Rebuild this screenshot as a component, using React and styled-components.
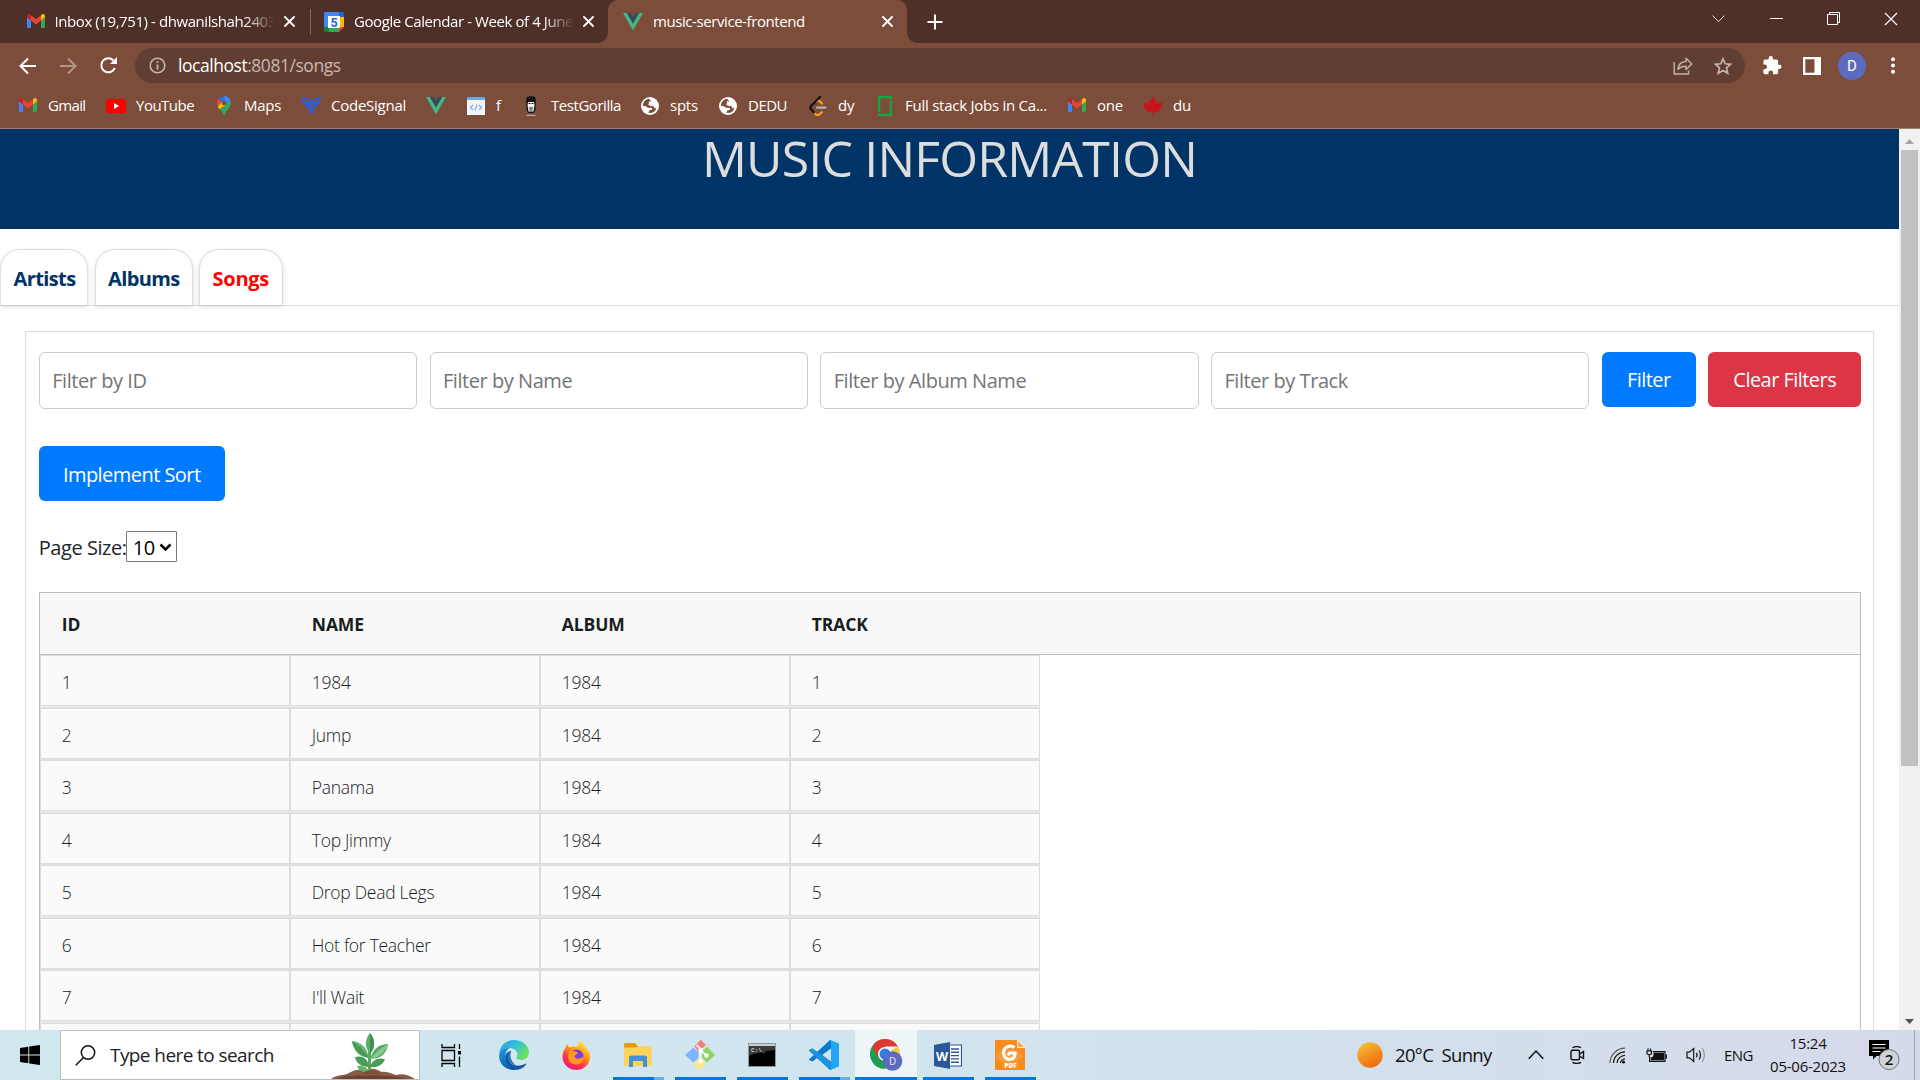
import React from "react";
import styled, { createGlobalStyle, css } from "styled-components";

const GlobalStyle = createGlobalStyle`
  *, *::before, *::after { box-sizing: border-box; }
  body { margin: 0; overflow: hidden; background: #fff; font-family: "Open Sans", "Noto Sans", sans-serif; }
  svg { display: block; flex: none; }
`;

const Desktop = styled.div`
  width: 1920px;
  height: 1080px;
  display: flex;
  flex-direction: column;
  overflow: hidden;
`;

/* ---------- browser chrome ---------- */

const TabStrip = styled.div`
  flex: none;
  height: 43px;
  display: flex;
  align-items: stretch;
  background: #4f3028;
`;

const flare = css`
  content: "";
  position: absolute;
  bottom: 0;
  width: 10px;
  height: 10px;
`;

const Tab = styled.div`
  position: relative;
  display: flex;
  align-items: center;
  width: ${(p) => p.$width}px;
  padding-left: ${(p) => p.$pad}px;
  color: #fff;
  ${(p) =>
    p.$active &&
    css`
      background: #7d4d3b;
      border-radius: 10px 10px 0 0;
      &::before {
        ${flare}
        left: -10px;
        background: radial-gradient(circle at 0 0, transparent 9.5px, #7d4d3b 10px);
      }
      &::after {
        ${flare}
        right: -10px;
        background: radial-gradient(circle at 100% 0, transparent 9.5px, #7d4d3b 10px);
      }
    `}
`;

const TabTitle = styled.div`
  width: 220px;
  margin: 0 9px 2px 10px;
  overflow: hidden;
  white-space: nowrap;
  font-size: 15px;
  line-height: 20px;
  letter-spacing: -0.42px;
  ${(p) =>
    p.$fade &&
    css`
      mask-image: linear-gradient(to right, #000 190px, transparent 220px);
    `}
`;

const TabDivider = styled.div`
  width: 1px;
  height: 26px;
  margin: 9px 13px 0 12px;
  background: #84655a;
`;

const NewTab = styled.div`
  display: flex;
  align-items: center;
  margin-left: 20px;
`;

const WindowControls = styled.div`
  display: flex;
  height: 37px;
  margin-left: auto;
`;

const ControlButton = styled.div`
  width: 57.5px;
  display: flex;
  align-items: center;
  justify-content: center;
`;

const Toolbar = styled.div`
  flex: none;
  height: 43px;
  padding: 5px 0 3px 19px;
  display: flex;
  align-items: center;
  background: #7d4d3b;
`;

const NavButtons = styled.div`
  width: 116px;
  display: flex;
  align-items: center;
  gap: 22px;
`;

const AddressBar = styled.div`
  width: 1610px;
  height: 35px;
  padding: 0 13px 0 14px;
  display: flex;
  align-items: center;
  border-radius: 18px;
  background: #613e32;
`;

const Address = styled.div`
  flex: 1;
  margin: 0 0 1px 12px;
  font-size: 17.5px;
  line-height: 24px;
  letter-spacing: -0.46px;
  color: #c9b7b0;
`;

const Host = styled.span`
  color: #fff;
`;

const AddressActions = styled.div`
  display: flex;
  gap: 21px;
  align-items: center;
`;

const ToolbarActions = styled.div`
  flex: 1;
  display: flex;
  align-items: center;
  padding-left: 18px;
  gap: 20.5px;
`;

const Avatar = styled.div`
  width: 28px;
  height: 28px;
  margin: 0 4px 0 -3px;
  border-radius: 50%;
  background: #5c6bc0;
  color: #fff;
  font: 15px/28px Roboto, sans-serif;
  text-align: center;
`;

const BookmarksBar = styled.div`
  flex: none;
  height: 43px;
  padding: 0 0 3px 18px;
  display: flex;
  align-items: center;
  gap: 20px;
  background: #7d4d3b;
  border-bottom: 1px solid #a27e71;
`;

const Bookmark = styled.div`
  display: flex;
  align-items: center;
  gap: 10px;
`;

const BookmarkIcon = styled.div`
  width: 20px;
  height: 20px;
  display: flex;
  align-items: center;
  justify-content: center;
`;

const BookmarkLabel = styled.div`
  width: ${(p) => p.$width}px;
  white-space: nowrap;
  font-size: 15px;
  line-height: 20px;
  letter-spacing: ${(p) => p.$spacing ?? -0.25}px;
  margin-bottom: 2px;
  color: #fff;
`;

/* ---------- page ---------- */

const Viewport = styled.div`
  flex: none;
  height: 901px;
  display: flex;
`;

const Page = styled.main`
  width: 1899px;
  background: #fff;
`;

const PageHeader = styled.header`
  height: 100px;
  background: #003366;
`;

const Title = styled.h1`
  margin: 0;
  font-size: 50px;
  line-height: 58px;
  font-weight: 400;
  letter-spacing: -0.82px;
  text-align: center;
  color: #ddd;
`;

const PageTabs = styled.nav`
  display: flex;
  gap: 6.5px;
  margin-top: 20px;
  height: 57px;
  border-bottom: 1px solid #ddd;
`;

const PageTab = styled.a`
  width: ${(p) => p.$width}px;
  height: 56px;
  padding: 2px 0 0 12.5px;
  border: 1px solid #ddd;
  border-bottom: none;
  border-radius: 20px 20px 0 0;
  box-shadow: 0 2px 5px rgba(0, 0, 0, 0.13);
  background: #fff;
  color: ${(p) => (p.$active ? "#ff0000" : "#003366")};
  font-size: 20px;
  font-weight: 700;
  line-height: 53px;
  letter-spacing: ${(p) => p.$spacing}px;
`;

const Panel = styled.section`
  margin: 25px 25px 0;
  padding: 20px 11.75px 0 12.75px;
  height: 699px;
  border: 1px solid #ddd;
  border-bottom: none;
`;

const FilterRow = styled.div`
  display: flex;
  align-items: flex-start;
  gap: 12.5px;
`;

const FilterInput = styled.input`
  flex: 1;
  min-width: 0;
  height: 57px;
  padding: 0 12.5px;
  border: 1px solid #ccc;
  border-radius: 6px;
  font-family: inherit;
  font-size: 20px;
  letter-spacing: -0.45px;
  outline: none;
  &::placeholder {
    color: #757575;
  }
`;

const Button = styled.button`
  width: ${(p) => p.$width}px;
  height: 55px;
  padding: ${(p) => p.$drop ?? 0}px 0 0;
  border: none;
  border-radius: 6px;
  background: ${(p) => (p.$danger ? "#dc3545" : "#007bff")};
  color: #fff;
  font-family: inherit;
  font-size: 20px;
  letter-spacing: -0.54px;
`;

const SortRow = styled.div`
  margin-top: 37px;
  display: flex;
`;

const PageSize = styled.label`
  margin-top: 30px;
  display: flex;
  align-items: flex-start;
  font-size: 20px;
  line-height: 33px;
  letter-spacing: -0.45px;
  color: #212529;
`;

const PageSizeText = styled.span`
  width: 87px;
  white-space: nowrap;
`;

const SizeSelect = styled.span`
  width: 51px;
  height: 31px;
  padding: 1px 4px 0 6px;
  display: flex;
  align-items: center;
  justify-content: space-between;
  border: 1px solid #767676;
  border-radius: 1px;
  color: #000;
`;

const Grid = styled.div`
  margin-top: 28px;
  height: 438px;
  overflow: hidden;
  border: 1px solid #babfc7;
  border-bottom: none;
`;

const GridHeader = styled.div`
  height: 62px;
  padding-top: 1px;
  display: flex;
  align-items: center;
  border-bottom: 1px solid #babfc7;
  background: #f8f8f8;
`;

const HeaderCell = styled.div`
  width: 250px;
  padding-left: 22px;
  font-size: 17.5px;
  font-weight: 700;
  letter-spacing: -0.1px;
  color: #181d1f;
`;

const GridRow = styled.div`
  width: 1000px;
  height: 52.5px;
  display: flex;
  border-bottom: 1px solid #dde2eb;
  background: #ececf0;
`;

const Cell = styled.div`
  width: 250px;
  height: 51px;
  padding: 2px 0 0 21px;
  border: 1px solid #ddd;
  background: #fafafa;
  font-size: 17.5px;
  font-weight: 350;
  line-height: 49px;
  letter-spacing: -0.28px;
  color: #181d1f;
`;

const Scrollbar = styled.div`
  width: 21px;
  display: flex;
  flex-direction: column;
  align-items: center;
  background: #f1f1f1;
`;

const ScrollArrow = styled.div`
  height: 21px;
  display: flex;
  align-items: center;
  padding-top: 3px;
`;

const ScrollThumb = styled.div`
  width: 17px;
  height: 616px;
  margin-bottom: auto;
  background: #c1c1c1;
`;

/* ---------- taskbar ---------- */

const Taskbar = styled.footer`
  flex: none;
  height: 50px;
  display: flex;
  background: linear-gradient(to right, #d0e7ee, #d1e5ee 45%, #d3dfec 75%, #d5daea);
`;

const StartButton = styled.div`
  width: 60px;
  display: flex;
  align-items: center;
  justify-content: center;
`;

const SearchBox = styled.div`
  width: 360px;
  display: flex;
  align-items: center;
  padding-left: 14px;
  border: 1px solid #b9bfc2;
  background: #fff;
`;

const SearchText = styled.div`
  flex: 1;
  margin: 0 0 1px 14px;
  font-size: 19px;
  letter-spacing: -0.58px;
  color: #222;
`;

const PlantSlot = styled.div`
  align-self: flex-end;
  margin-right: 4px;
`;

const TaskButton = styled.div`
  width: 62px;
  display: flex;
  flex-direction: column;
  align-items: center;
  justify-content: space-between;
  background: ${(p) => (p.$active ? "rgba(255,255,255,0.6)" : "transparent")};
  &:first-of-type {
    margin-right: 1px;
  }
`;

const TaskList = styled.div`
  display: flex;
`;

const TaskIcon = styled.div`
  height: 47px;
  padding-top: 3px;
  display: flex;
  align-items: center;
`;

const Underline = styled.div`
  width: ${(p) => (p.$full ? 62 : 51)}px;
  height: 3px;
  background: ${(p) =>
    p.$stacked ? "linear-gradient(to right, #0078d7 41px, #66aee7 41px)" : "#0078d7"};
`;

const Tray = styled.div`
  margin-left: auto;
  display: flex;
  align-items: center;
`;

const TrayItem = styled.div`
  width: ${(p) => p.$width}px;
  margin-right: ${(p) => p.$gap}px;
  display: flex;
  align-items: center;
`;

const TrayText = styled.div`
  white-space: pre;
  font-size: ${(p) => p.$size}px;
  letter-spacing: ${(p) => p.$spacing}px;
  line-height: 24px;
  color: #111;
`;

const Clock = styled.div`
  width: 76px;
  margin-right: 23px;
  display: flex;
  flex-direction: column;
  align-items: center;
  font-size: 15px;
  line-height: 23px;
  letter-spacing: -0.24px;
  white-space: nowrap;
  color: #111;
`;

const ShowDesktop = styled.div`
  width: 6px;
  height: 50px;
  border-left: 1px solid #9da4b0;
`;

/* ---------- icons ---------- */

const GmailIcon = ({ w = 18 }) => (
  <svg width={w} height={w * 0.78} viewBox="0 0 18 14">
    <path d="M0 3v9.8c0 .7.5 1.2 1.2 1.2H4V6.5L0 3z" fill="#4285f4" />
    <path d="M14 6.5V14h2.800c.7 0 1.200-.5 1.200-1.200V3l-4 3.500z" fill="#34a853" />
    <path d="M14 1.400v5.100l4-3.200V2.100C18 .3 16-.6 14.700.5l-.7.900z" fill="#fbbc04" />
    <path d="M0 2.100v1.200l4 3.200V1.400L3.300.5C2-.6 0 .3 0 2.100z" fill="#c5221f" />
    <path d="M4 1.200v5.300l5 4 5-4V1.200L9 5.200 4 1.200z" fill="#ea4335" />
  </svg>
);

const CalendarIcon = () => (
  <svg width="20" height="20" viewBox="0 0 20 20">
    <path d="M1.500 0H15v5H5v10H0V1.500C0 .7.7 0 1.500 0z" fill="#4285f4" />
    <path d="M15 0h3.500c.8 0 1.500.7 1.500 1.500V5h-5V0z" fill="#1967d2" />
    <path d="M15 5h5v10h-5z" fill="#fbbc04" />
    <path d="M5 15h10v5H5z" fill="#34a853" />
    <path d="M0 15h5v5H1.500C.7 20 0 19.300 0 18.500V15z" fill="#188038" />
    <path d="M15 15h5l-5 5v-5z" fill="#ea4335" />
    <path d="M4 4h12v12H4z" fill="#fff" />
    <text x="10" y="14.500" fontSize="12.500" fontWeight="700" textAnchor="middle" fontFamily="Roboto, sans-serif" fill="#1967d2">5</text>
  </svg>
);

const VueIcon = () => (
  <svg width="20" height="17.500" viewBox="0 0 196 170">
    <path d="M0 0h39l59 102L157 0h39L98 170z" fill="#41b883" />
    <path d="M39 0h36l23 40 23-40h36L98 102z" fill="#35495e" />
  </svg>
);

const CloseIcon = ({ s = 11, c = "#fff", sw = 1.8 }) => (
  <svg width={s} height={s} viewBox="0 0 11 11" stroke={c} strokeWidth={sw} strokeLinecap="round">
    <path d="M1 1l9 9M10 1l-9 9" />
  </svg>
);

const PlusIcon = () => (
  <svg width="16" height="16" viewBox="0 0 16 16" stroke="#fff" strokeWidth="2">
    <path d="M8 .5v15M.5 8h15" />
  </svg>
);

const BackIcon = ({ flip, c = "#fff" }) => (
  <svg width="18" height="18" viewBox="0 0 18 18" fill="none" stroke={c} strokeWidth="2">
    <path d={flip ? "M1 9h15M9 1.500L16.500 9 9 16.500" : "M17 9H2M9 1.500L1.500 9 9 16.500"} />
  </svg>
);

const ReloadIcon = () => (
  <svg width="19" height="19" viewBox="0 0 19 19" fill="none" stroke="#fff" strokeWidth="2">
    <path d="M15.800 12A7 7 0 1 1 14.400 4.500" />
    <path d="M18 1v7h-7z" fill="#fff" stroke="none" />
  </svg>
);

const InfoIcon = () => (
  <svg width="17" height="17" viewBox="0 0 17 17" fill="none" stroke="#c3b4ae" strokeWidth="1.600">
    <circle cx="8.500" cy="8.500" r="7.300" />
    <path d="M8.500 7.500v5M8.500 4.200v1.900" strokeWidth="1.800" />
  </svg>
);

const ShareIcon = () => (
  <svg width="20" height="18" viewBox="0 0 20 18" fill="none" stroke="#c3b4ae" strokeWidth="1.400">
    <path d="M1.200 5v12h14.300v-3.500" />
    <path d="M5 12.500c.3-5 3.500-7.800 8-8V1.300L18.800 7 13 12.500V9.300c-3.600 0-6 .8-8 3.200z" strokeLinejoin="round" />
  </svg>
);

const StarIcon = () => (
  <svg width="18" height="18" viewBox="0 0 18 18" fill="none" stroke="#c3b4ae" strokeWidth="1.700">
    <path d="M9 1.800l2.200 5 5.300.5-4 3.600 1.200 5.300L9 13.400l-4.700 2.800 1.200-5.300-4-3.600 5.300-.5z" />
  </svg>
);

const PuzzleIcon = () => (
  <svg width="19" height="19" viewBox="1.500 1 22 22" fill="#fff">
    <path d="M20.500 11H19V7c0-1.100-.9-2-2-2h-4V3.500a2.500 2.500 0 0 0-5 0V5H4c-1.100 0-2 .9-2 2v3.800h1.500a2.700 2.700 0 0 1 0 5.400H2V20c0 1.100.9 2 2 2h3.800v-1.500a2.700 2.700 0 0 1 5.400 0V22H17c1.100 0 2-.9 2-2v-4h1.500a2.500 2.500 0 0 0 0-5z" />
  </svg>
);

const SidePanelIcon = () => (
  <svg width="18" height="18" viewBox="0 0 18 18">
    <path d="M0 0h18v18H0z M2.300 2.300v13.400h9.200V2.300z" fill="#fff" fillRule="evenodd" />
  </svg>
);

const DotsIcon = () => (
  <svg width="4" height="17" viewBox="0 0 4 17" fill="#fff">
    <circle cx="2" cy="2.300" r="2" />
    <circle cx="2" cy="8.500" r="2" />
    <circle cx="2" cy="14.700" r="2" />
  </svg>
);

const YouTubeIcon = () => (
  <svg width="20" height="14" viewBox="0 0 20 14">
    <rect width="20" height="14" rx="3" fill="#f00" />
    <path d="M8 4l5.200 3L8 10z" fill="#fff" />
  </svg>
);

const MapsIcon = () => (
  <svg width="14" height="20" viewBox="0 0 14 20">
    <path d="M7 0a7 7 0 0 1 6.500 4.500L7.500 12 3 8z" fill="#4285f4" />
    <path d="M1.500 2.800A7 7 0 0 1 5 .3l3 2.900L3.500 8z" fill="#1a73e8" />
    <path d="M1.500 2.500L5.200 5.700.9 10.600C-.5 8-.3 4.800 1.500 2.500z" fill="#ea4335" />
    <path d="M9 8.700L2.300 13.400.8 10.500l4-4.500z" fill="#fbbc04" />
    <path d="M13.500 4.500c1 3 .2 5.300-1.500 7.500-2.500 3.200-3.800 4.500-4.500 8-1 0-1.500-3-2.500-4.300L2.200 12.600l3.500-.4L9 8.700z" fill="#34a853" />
    <circle cx="7" cy="7" r="2.300" fill="#7d4d3b" />
  </svg>
);

const CodeSignalIcon = () => (
  <svg width="20" height="18" viewBox="0 0 20 18" fill="none" stroke="#1f62f0" strokeWidth="1.700" strokeLinejoin="round">
    <path d="M1 1.500l6 1 3 3 3-3 6-1-1.500 3.700-4 .8-1.500 1h3.500l-1.200 2.800-2.800.7L10 16.500l-1.500-6-2.800-.7L4.500 7H8L6.500 6l-4-.8z" />
    <path d="M10 5.500V10" />
  </svg>
);

const CodeFileIcon = () => (
  <svg width="18" height="18" viewBox="0 0 18 18">
    <rect width="18" height="18" fill="#f2f6fb" />
    <rect width="18" height="3" fill="#6aa9e9" />
    <path d="M6 8l-2.500 2.500L6 13M12 8l2.500 2.500L12 13M10 7.500l-2 6" fill="none" stroke="#7faedb" strokeWidth="1.200" />
  </svg>
);

const GorillaIcon = () => (
  <svg width="12" height="20" viewBox="0 0 12 20">
    <path d="M1.500 1.500C3.500-.2 8.500-.2 10.500 1.500l.3 6-.5 7L8.500 17h-5L1.700 14.500l-.5-7z" fill="#111" />
    <path d="M3 6h6l.5 3-1 6.500h-5l-1-6.500z" fill="#f3f3f3" />
    <path d="M3.500 7.500h2M6.500 7.500h2M4 12h4M4.500 14h3" stroke="#111" strokeWidth="1" />
    <path d="M1.500 19.300h9" stroke="#cfc3bd" strokeWidth="1" />
  </svg>
);

const GlobeIcon = () => (
  <svg width="18" height="18" viewBox="0 0 18 18">
    <circle cx="9" cy="9" r="9" fill="#fff" />
    <path d="M8 1.800C4.500 2.300 2 5 1.900 8.700L5 9.200l1.800 1.600h3.400c.8 0 1.200 1.300.6 2l-2.600.6-.7 2.500c3.500.6 6.500-1.200 7.900-4.200l-3.200-3.600-3.700-.4-.9-2 2.500-1.500z" fill="#7d4d3b" />
    <path d="M8 4.200l1.500 1.300-2 1.500 1 1.300 4 .4 1.500 2.800" fill="none" stroke="#fff" strokeWidth="1" />
  </svg>
);

const LeetIcon = () => (
  <svg width="18" height="20" viewBox="0 0 18 20" fill="none" strokeLinecap="round" strokeWidth="2.200">
    <path d="M5 16.500l1.500 1.700c1.200 1.100 3 1.100 4.200 0l2-2M7 5.500c1.500-1.200 3-1 4.300.3l1.700 1.700" stroke="#ffa116" />
    <path d="M11 1L2.300 9.800c-1 1.100-1 2.600 0 3.600L5 16.500" stroke="#111" />
    <path d="M8 11.700h8.500" stroke="#b3b3b3" />
  </svg>
);

const BracketIcon = () => (
  <svg width="14" height="20" viewBox="0 0 14 20" fill="none" stroke="#0caa41" strokeWidth="2.200">
    <path d="M1.200 16V1.200h11.600V3M12.800 4.500v14.300H1.200v-1.500" />
  </svg>
);

const LeafIcon = () => (
  <svg width="20" height="20" viewBox="0 0 20 20">
    <path d="M10 0l2 4 1.800-1-.8 5 2.500-2.300.6 1.500L20 6.700 18.700 10l1.300 1-4.500 3.500.5 1.700-5.500-.7V20h-1v-4.500L4 16.200l.5-1.700L0 11l1.300-1L0 6.700l3.900.5.6-1.500L7 8l-.8-5L8 4z" fill="#c4161c" />
  </svg>
);

const ChevronIcon = ({ w = 14, up, c = "#fff", sw = 1 }) => (
  <svg width={w} height={w * 0.6} viewBox="0 0 15 9" fill="none" stroke={c} strokeWidth={sw}>
    <path d={up ? "M.7 8.300L7.500 1l6.800 7.300" : "M.7.7l6.800 7 6.800-7"} />
  </svg>
);

const MinimizeIcon = () => (
  <svg width="13" height="13" viewBox="0 0 13 13"><path d="M0 6h13v1H0z" fill="#fff" /></svg>
);

const RestoreIcon = () => (
  <svg width="13" height="13" viewBox="0 0 13 13" fill="none" stroke="#fff" strokeWidth="1">
    <path d="M.5 2.500h10v10H.5zM2.500 2.500v-2h10v10h-2" />
  </svg>
);

const SelectArrow = () => (
  <svg width="13" height="9" viewBox="0 0 13 9" fill="none" stroke="#000" strokeWidth="2.500">
    <path d="M1.500 1.500l5 5 5-5" />
  </svg>
);

const Triangle = ({ down, c }) => (
  <svg width="9" height="5" viewBox="0 0 9 5"><path d={down ? "M0 0h9L4.500 5z" : "M0 5h9L4.500 0z"} fill={c} /></svg>
);

const WindowsIcon = () => (
  <svg width="20" height="20" viewBox="0 0 20 20" fill="#000">
    <path d="M0 2.900l8.300-1.200v7.900H0zM9.200 1.500L20 0v9.600H9.200zM0 10.400h8.300v7.900L0 17.100zM9.200 10.400H20V20L9.200 18.500z" />
  </svg>
);

const SearchIcon = () => (
  <svg width="21" height="21" viewBox="0 0 21 21" fill="none" stroke="#111" strokeWidth="1.500">
    <circle cx="13" cy="7.500" r="6.700" />
    <path d="M8.500 12.500L.8 20.300" />
  </svg>
);

const PlantIcon = () => (
  <svg width="84" height="46" viewBox="0 0 84 46">
    <path d="M0 46c6-5 13-3 18-6 6-4 12-4 17-3 6-3 12 0 16 2 6-1 9 2 14 3 6-2 13 0 19 4z" fill="#8a5a44" />
    <path d="M6 46c8-4 14-2 20-4 8 2 20-1 28 1 10 0 14 1 22 3z" fill="#6d4231" />
    <path d="M38.500 41V14" stroke="#5ea75a" strokeWidth="3" />
    <path d="M39 0c5 6 6 14 0 21-6-7-5-15 0-21z" fill="#5fae68" />
    <path d="M39 0c5 6 6 14 0 21z" fill="#3f8f50" />
    <path d="M21 8c9 1 15 6 17 17C27 24 22 17 21 8z" fill="#6cb974" />
    <path d="M21 8c7 4 12 9 17 17C28 23 23 16 21 8z" fill="#459a55" />
    <path d="M57 11c-9 0-15 5-18 15 11 0 17-6 18-15z" fill="#58aa62" />
    <path d="M57 11c-7 4-13 9-18 15 8-1 15-6 18-15z" fill="#86c98a" />
    <path d="M24 24c8-2 13 2 14 10-8 0-13-4-14-10z" fill="#4a9c58" />
    <path d="M54 26c-8-2-13 1-15 8 7 1 13-2 15-8z" fill="#4a9c58" />
    <path d="M26 33c6-1 10 1 12 6-6 1-10-1-12-6z" fill="#67b46e" />
    <path d="M30 41c6-5 14-5 20 0z" fill="#7d4e39" />
  </svg>
);

const TaskViewIcon = () => (
  <svg width="21" height="23" viewBox="0 0 21 23" fill="none" stroke="#000" strokeWidth="1.300">
    <path d="M1 0v3.500h12.500V0M1 6.500h12.500v10H1zM1 23v-3.500h12.500V23M18.500 0v5M18.500 12.500V23" />
    <path d="M17 7h3v3.500h-3z" fill="#000" stroke="none" />
  </svg>
);

const EdgeIcon = () => (
  <svg width="30" height="30" viewBox="0 0 30 30">
    <defs>
      <linearGradient id="edgeTop" x1="0" y1="0" x2="1" y2="0.500">
        <stop offset="0" stopColor="#2b9be0" />
        <stop offset=".55" stopColor="#2fc3dc" />
        <stop offset="1" stopColor="#6ce05a" />
      </linearGradient>
      <linearGradient id="edgeLow" x1="0" y1="0" x2="0.600" y2="1">
        <stop offset="0" stopColor="#1b9de2" />
        <stop offset="1" stopColor="#0c59a4" />
      </linearGradient>
    </defs>
    <path d="M.3 13C1.500 5 7.500 0 15 0c8.500 0 15 5.500 15 12.500 0 4.500-3.500 7.500-7.800 7.500-3 0-5-.8-5-1.900 0-.7 1.300-1.300 1.300-3.400C18.500 11 15 8 10.500 8 6 8 2 10 .3 13z" fill="url(#edgeTop)" />
    <path d="M.2 14.500C1 10 5 8 10.500 8c-3 2-4.300 5-4.300 8.500 0 6.500 5 11.500 11.500 13.200C8 31.500-.8 24.500.2 14.500z" fill="url(#edgeLow)" />
    <path d="M12.500 11c-2 1.500-3 3.800-3 6.500 0 6 6.500 9.500 13 7.800 2-.5 4-1.500 5.200-1.800C25.300 27.500 21 30 17 29.800 10 28 6.200 23 6.200 16.500 6.200 13.500 9 11 12.500 11z" fill="#1155a3" />
    <path d="M12.500 11c-2 1.500-3 3.800-3 6.500 0 4 3 7 7.500 7.900-5.500-4-7-10-4.500-14.400z" fill="#1273c7" />
  </svg>
);

const FirefoxIcon = () => (
  <svg width="29" height="29" viewBox="0 0 29 29">
    <defs>
      <linearGradient id="foxBody" x1="0.800" y1="0" x2="0.250" y2="1">
        <stop offset="0" stopColor="#fff44f" />
        <stop offset=".4" stopColor="#ff980e" />
        <stop offset=".7" stopColor="#ff3647" />
        <stop offset="1" stopColor="#e31587" />
      </linearGradient>
    </defs>
    <path d="M18 0c4 3 5 5 5.500 7C22.500 5 26 8 27.500 12 30 20 24 29 14.500 29 6.500 29 .5 23 .5 15.500c0-4 1.500-7 3-8.500L4.500 3c1 1.500 2 2 3 3.500 3-1.500 6-1 8-.500C15.500 3.500 17 1.500 18 0z" fill="url(#foxBody)" />
    <circle cx="14.500" cy="15.500" r="7" fill="#7a3fe0" />
    <path d="M7 10c2-1 4 0 6 .5 1.500.5 3 .8 2.500 2-.5 1-3 1.500-3 3 1.500 3.500 6 2.500 8.500 0 .5 5-3 8-7 8-5 0-8-4-8-8z" fill="#ff9a1f" />
  </svg>
);

const ExplorerIcon = () => (
  <svg width="28" height="24" viewBox="0 0 28 24">
    <path d="M1 0h10l2.500 3H27v20H0V1z" fill="#e09f00" />
    <path d="M0 4.500h12L14 3h13.500v20H0z" fill="#ffd25c" />
    <path d="M5 14.500c0-1 .8-2 2-2h14c1.200 0 2 1 2 2V24h-4v-6H9v6H5z" fill="#3f94d6" />
  </svg>
);

const GitIcon = () => (
  <svg width="30" height="30" viewBox="0 0 30 30">
    <path d="M9.500 6L15 .500c.7-.6 1-.6 1.600 0L21 5l-8 7z" fill="#f87d7d" />
    <path d="M8.500 7.500l5 5V18l-5 4.500L.500 15.500v-1z" fill="#80b3ff" />
    <path d="M22 6.500l7.500 8v1L22 22.500l-5-5v-6z" fill="#8ed460" />
    <path d="M15 17.500l6 6-5.500 6h-1l-6-6z" fill="#ffe680" />
    <path d="M11.500 5l4 4v13M15.500 10.500l6 5" fill="none" stroke="#eef4f6" strokeWidth="2" />
    <circle cx="15.500" cy="10" r="2.200" fill="#fff" />
    <circle cx="21.500" cy="15.500" r="2.200" fill="#fff" />
    <circle cx="15.500" cy="21.500" r="2.200" fill="#fff" />
  </svg>
);

const TerminalIcon = () => (
  <svg width="28" height="24" viewBox="0 0 28 24">
    <path d="M.500.500h27v23H.500z" fill="#000" stroke="#8f979b" />
    <path d="M1 1h26v2H1z" fill="#c9ced1" />
    <path d="M1 3h26v4C17 8 8 10 1 13z" fill="#3b3b3b" />
    <text x="3" y="9" fontSize="6" fontFamily="Liberation Mono, monospace" fill="#fff">C:\_</text>
  </svg>
);

const VsCodeIcon = () => (
  <svg width="30" height="30" viewBox="0 0 30 30">
    <path d="M21 0L8 12 3.500 8.500 0 10v.8L5 15 0 19.200v.8l3.500 1.500L8 18l13 12 3-2V2z" fill="#0a7ccb" />
    <path d="M22 8.500v13L13.200 15z" fill="#d3e6ee" />
    <path d="M21.500 0L30 3.500v23L21.500 30l.5-3V3z" fill="#24a6f2" />
    <path d="M3.500 8.500L0 10v.8L18.500 27l3 3 .5-8.500z" fill="#2093dc" />
  </svg>
);

const ChromeIcon = () => (
  <svg width="33" height="32" viewBox="0 0 33 32">
    <path d="M15 15L2 7.500A15 15 0 0 0 15 30l6.500-11.300z" fill="#1f9d50" />
    <path d="M15 15L28 7.500A15 15 0 0 1 15 30l6.500-11.300z" fill="#fcc934" />
    <path d="M15 7.500h13A15 15 0 0 0 2 7.500L8.500 18.700z" fill="#db3a2e" />
    <circle cx="15" cy="15" r="7" fill="#fff" />
    <circle cx="15" cy="15" r="5.500" fill="#2f7de9" />
    <circle cx="22.500" cy="22" r="9.800" fill="#5c6bc0" />
    <text x="22.500" y="26" fontSize="11" textAnchor="middle" fontFamily="Roboto, sans-serif" fill="#dfe3f5">D</text>
  </svg>
);

const WordIcon = () => (
  <svg width="28" height="27" viewBox="0 0 28 27">
    <path d="M15 3h12.500v21H15z" fill="#fff" stroke="#2a569a" strokeWidth="1.200" />
    <path d="M17 7h8M17 10.300h8M17 13.600h8M17 16.900h8M17 20.200h8" stroke="#2a569a" strokeWidth="1.400" />
    <path d="M0 3l16-3v27L0 24z" fill="#2a569a" />
    <text x="8" y="18.500" fontSize="12.500" fontWeight="700" textAnchor="middle" fontFamily="Open Sans, sans-serif" fill="#fff">W</text>
  </svg>
);

const FoxitIcon = () => (
  <svg width="30" height="30" viewBox="0 0 30 30">
    <path d="M0 0h22l8 8v22H0z" fill="#f68b1f" />
    <path d="M0 17L13 4l15 12-14 12z" fill="#f9a54c" opacity=".6" />
    <path d="M22.500 0v7.500H30z" fill="#f7a64f" stroke="#fff" strokeWidth=".8" />
    <path d="M19.500 7.500A6.800 6.800 0 1 0 14 19.500c4 0 6-2.500 6-6.500h-5.500l-1.500 2.500" fill="none" stroke="#fff" strokeWidth="3.200" />
    <text x="15.500" y="28" fontSize="6.500" fontWeight="800" textAnchor="middle" fontFamily="Open Sans, sans-serif" fill="#fff">PDF</text>
  </svg>
);

const SunIcon = () => (
  <svg width="26" height="26" viewBox="0 0 26 26">
    <defs>
      <linearGradient id="sunFill" x1="0.200" y1="0" x2="0.700" y2="1">
        <stop offset="0" stopColor="#f5bf35" />
        <stop offset="1" stopColor="#f2660a" />
      </linearGradient>
    </defs>
    <circle cx="13" cy="13" r="12.700" fill="url(#sunFill)" />
  </svg>
);

const MeetIcon = () => (
  <svg width="15" height="18" viewBox="0 0 15 18" fill="none" stroke="#111" strokeWidth="1.400">
    <rect x="1" y="4.200" width="8.500" height="9.600" rx="1.500" />
    <path d="M9.500 8l4-2.500v7l-4-2.500M2.500 1.700C5 .4 8.500.4 11 1.700M2.500 16.300c2.500 1.300 6 1.300 8.500 0" />
  </svg>
);

const WifiIcon = () => (
  <svg width="17" height="17" viewBox="0 0 17 17" fill="none" stroke="#111" strokeWidth="1.200">
    <path d="M1 16C1 8 8 1.200 16 1.200" stroke="#555" />
    <path d="M4.500 16C4.500 10 10 4.800 16 4.800M8 16c0-4 4-7.700 8-7.700M11.500 16c0-2 2-4.200 4.500-4.200" />
    <circle cx="14.500" cy="15" r="1.600" fill="#111" stroke="none" />
  </svg>
);

const BatteryIcon = () => (
  <svg width="21" height="15" viewBox="0 0 21 15" fill="none" stroke="#111" strokeWidth="1.200">
    <path d="M7 3.600h12v9.800H3.600V9" />
    <path d="M7.500 4.800h10.500v7.500H4.800V9.500c1.700 0 2.700-1 2.700-2.500z" fill="#111" stroke="none" />
    <path d="M19.500 6.500h1.500v4h-1.500z" fill="#111" stroke="none" />
    <path d="M1 3h4.500v2.500c0 1.300-4.500 1.300-4.500 0zM2 3V.500M4.500 3V.500M3.200 6.500V9" />
  </svg>
);

const SpeakerIcon = () => (
  <svg width="20" height="18" viewBox="0 0 20 18" fill="none" stroke="#111" strokeWidth="1.200">
    <path d="M1 6.200h2.500L7.700 2.500v13L3.500 11.800H1z" />
    <path d="M10.300 6.800c.9 1.200.9 3.200 0 4.400M13 4.500c2 2.500 2 6.500 0 9" />
    <path d="M16 2c3.200 4 3.200 10 0 14" stroke="#8e939b" />
  </svg>
);

const NotificationIcon = () => (
  <svg width="32" height="34" viewBox="0 0 32 34">
    <path d="M0 2h20v16H7.500L4 21.500V18H0z" fill="#000" />
    <path d="M3.500 6.500h13M3.500 10h13M3.500 13.500h8" stroke="#fff" strokeWidth="1.200" />
    <circle cx="20" cy="21.500" r="10" fill="#cfd3d9" stroke="#6f747c" />
    <text x="20" y="27" fontSize="15" fontWeight="600" textAnchor="middle" fontFamily="Open Sans, sans-serif" fill="#111">2</text>
  </svg>
);

/* ---------- data ---------- */

const bookmarks = [
  { icon: <GmailIcon />, label: "Gmail", width: 38, spacing: -0.65 },
  { icon: <YouTubeIcon />, label: "YouTube", width: 58, spacing: -0.5 },
  { icon: <MapsIcon />, label: "Maps", width: 37 },
  { icon: <CodeSignalIcon />, label: "CodeSignal", width: 75 },
  { icon: <VueIcon /> },
  { icon: <CodeFileIcon />, label: "f", width: 5 },
  { icon: <GorillaIcon />, label: "TestGorilla", width: 69, spacing: -0.45 },
  { icon: <GlobeIcon />, label: "spts", width: 28 },
  { icon: <GlobeIcon />, label: "DEDU", width: 40, spacing: -0.5 },
  { icon: <LeetIcon />, label: "dy", width: 17 },
  { icon: <BracketIcon />, label: "Full stack Jobs in Ca...", width: 142 },
  { icon: <GmailIcon />, label: "one", width: 26 },
  { icon: <LeafIcon />, label: "du", width: 18 },
];

const songs = ["1984", "Jump", "Panama", "Top Jimmy", "Drop Dead Legs", "Hot for Teacher", "I'll Wait"].map(
  (name, i) => ({ id: i + 1, name, album: "1984", track: i + 1 })
);

const tasks = [
  { icon: <TaskViewIcon /> },
  { icon: <EdgeIcon /> },
  { icon: <FirefoxIcon /> },
  { icon: <ExplorerIcon />, open: true, stacked: true },
  { icon: <GitIcon />, open: true },
  { icon: <TerminalIcon />, open: true },
  { icon: <VsCodeIcon />, open: true, stacked: true },
  { icon: <ChromeIcon />, open: true, active: true },
  { icon: <WordIcon />, open: true },
  { icon: <FoxitIcon />, open: true },
];

export default function App() {
  return (
    <Desktop>
      <GlobalStyle />
      <TabStrip>
        <Tab $width={298} $pad={26.5}>
          <GmailIcon />
          <TabTitle $fade>Inbox (19,751) - dhwanilshah2403</TabTitle>
          <CloseIcon />
        </Tab>
        <TabDivider />
        <Tab $width={284} $pad={0}>
          <CalendarIcon />
          <TabTitle $fade>Google Calendar - Week of 4 June</TabTitle>
          <CloseIcon />
        </Tab>
        <Tab $width={299} $pad={15} $active>
          <VueIcon />
          <TabTitle>music-service-frontend</TabTitle>
          <CloseIcon />
        </Tab>
        <NewTab><PlusIcon /></NewTab>
        <WindowControls>
          <ControlButton><ChevronIcon w={13} /></ControlButton>
          <ControlButton><MinimizeIcon /></ControlButton>
          <ControlButton><RestoreIcon /></ControlButton>
          <ControlButton><CloseIcon s={14} sw={0.9} /></ControlButton>
        </WindowControls>
      </TabStrip>

      <Toolbar>
        <NavButtons>
          <BackIcon />
          <BackIcon flip c="#b1948a" />
          <ReloadIcon />
        </NavButtons>
        <AddressBar>
          <InfoIcon />
          <Address><Host>localhost</Host>:8081/songs</Address>
          <AddressActions><ShareIcon /><StarIcon /></AddressActions>
        </AddressBar>
        <ToolbarActions>
          <PuzzleIcon />
          <SidePanelIcon />
          <Avatar>D</Avatar>
          <DotsIcon />
        </ToolbarActions>
      </Toolbar>

      <BookmarksBar>
        {bookmarks.map((b, i) => (
          <Bookmark key={i}>
            <BookmarkIcon>{b.icon}</BookmarkIcon>
            {b.label && <BookmarkLabel $width={b.width} $spacing={b.spacing}>{b.label}</BookmarkLabel>}
          </Bookmark>
        ))}
      </BookmarksBar>

      <Viewport>
        <Page>
          <PageHeader>
            <Title>MUSIC INFORMATION</Title>
          </PageHeader>
          <PageTabs>
            <PageTab $width={88} $spacing={-0.6}>Artists</PageTab>
            <PageTab $width={98} $spacing={-0.6}>Albums</PageTab>
            <PageTab $width={84} $spacing={-0.25} $active>Songs</PageTab>
          </PageTabs>
          <Panel>
            <FilterRow>
              <FilterInput placeholder="Filter by ID" />
              <FilterInput placeholder="Filter by Name" />
              <FilterInput placeholder="Filter by Album Name" />
              <FilterInput placeholder="Filter by Track" />
              <Button $width={94}>Filter</Button>
              <Button $width={153} $danger>Clear Filters</Button>
            </FilterRow>
            <SortRow>
              <Button $width={186} $drop={2}>Implement Sort</Button>
            </SortRow>
            <PageSize>
              <PageSizeText>Page Size:</PageSizeText>
              <SizeSelect>10<SelectArrow /></SizeSelect>
            </PageSize>
            <Grid>
              <GridHeader>
                {["ID", "NAME", "ALBUM", "TRACK"].map((h) => (
                  <HeaderCell key={h}>{h}</HeaderCell>
                ))}
              </GridHeader>
              {songs.map((s) => (
                <GridRow key={s.id}>
                  <Cell>{s.id}</Cell>
                  <Cell>{s.name}</Cell>
                  <Cell>{s.album}</Cell>
                  <Cell>{s.track}</Cell>
                </GridRow>
              ))}
              <GridRow>
                <Cell />
                <Cell />
                <Cell />
                <Cell />
              </GridRow>
            </Grid>
          </Panel>
        </Page>
        <Scrollbar>
          <ScrollArrow><Triangle c="#a3a3a3" /></ScrollArrow>
          <ScrollThumb />
          <ScrollArrow><Triangle down c="#505050" /></ScrollArrow>
        </Scrollbar>
      </Viewport>

      <Taskbar>
        <StartButton><WindowsIcon /></StartButton>
        <SearchBox>
          <SearchIcon />
          <SearchText>Type here to search</SearchText>
          <PlantSlot><PlantIcon /></PlantSlot>
        </SearchBox>
        <TaskList>
          {tasks.map((t, i) => (
            <TaskButton key={i} $active={t.active}>
              <TaskIcon>{t.icon}</TaskIcon>
              {t.open && <Underline $full={t.active} $stacked={t.stacked} />}
            </TaskButton>
          ))}
        </TaskList>
        <Tray>
          <TrayItem $width={26} $gap={12}><SunIcon /></TrayItem>
          <TrayItem $width={97} $gap={36}><TrayText $size={18.5} $spacing={-0.65}>20°C  Sunny</TrayText></TrayItem>
          <TrayItem $width={16} $gap={26}><ChevronIcon w={16} up c="#111" sw={1.4} /></TrayItem>
          <TrayItem $width={15} $gap={24}><MeetIcon /></TrayItem>
          <TrayItem $width={17} $gap={20}><WifiIcon /></TrayItem>
          <TrayItem $width={21} $gap={19}><BatteryIcon /></TrayItem>
          <TrayItem $width={20} $gap={18}><SpeakerIcon /></TrayItem>
          <TrayItem $width={29} $gap={17}><TrayText $size={15} $spacing={-0.6}>ENG</TrayText></TrayItem>
          <Clock><span>15:24</span><span>05-06-2023</span></Clock>
          <TrayItem $width={32} $gap={13}><NotificationIcon /></TrayItem>
          <ShowDesktop />
        </Tray>
      </Taskbar>
    </Desktop>
  );
}
